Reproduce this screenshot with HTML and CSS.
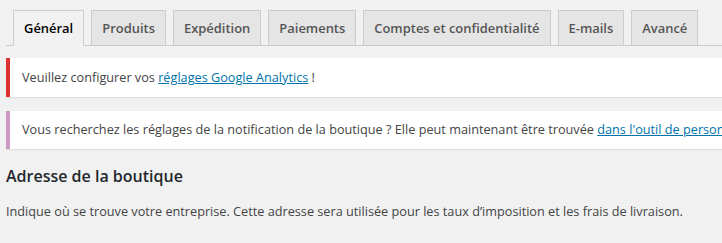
FILE: index.html
```html
<!DOCTYPE html>
<html lang="fr">
<head>
<meta charset="utf-8">
<title>Réglages</title>
<link rel="stylesheet" href="styles.css">
</head>
<body>
<div class="wrap">
  <nav class="tabs">
    <a class="tab active" href="#">Général</a>
    <a class="tab" href="#">Produits</a>
    <a class="tab" href="#">Expédition</a>
    <a class="tab" href="#">Paiements</a>
    <a class="tab" href="#">Comptes et confidentialité</a>
    <a class="tab" href="#">E-mails</a>
    <a class="tab" href="#">Avancé</a>
  </nav>
  <div class="notice notice-error">
    <p>Veuillez configurer vos <a href="#">réglages Google Analytics</a> !</p>
  </div>
  <div class="notice notice-wc">
    <p>Vous recherchez les réglages de la notification de la boutique ? Elle peut maintenant être trouvée <a href="#">dans l'outil de personnalisation</a>.</p>
  </div>
  <h2 class="section-title">Adresse de la boutique</h2>
  <p class="section-desc">Indique où se trouve votre entreprise. Cette adresse sera utilisée pour les taux d’imposition et les frais de livraison.</p>
</div>
</body>
</html>
```
FILE: styles.css
```css
html, body {
  margin: 0;
  padding: 0;
  background: #f1f1f1;
}
body {
  font-family: "Open Sans", "Noto Sans", sans-serif;
  font-size: 12.7px;
  color: #444;
  overflow: hidden;
}
.wrap {
  padding-left: 6px;
}
.tabs {
  display: flex;
  padding-top: 10px;
  border-bottom: 1px solid #ccc;
  white-space: nowrap;
}
.tab {
  margin-left: 7px;
  margin-bottom: -1px;
  padding: 5px 10px;
  border: 1px solid #ccc;
  background: #e5e5e5;
  color: #555;
  font-size: 12.95px;
  font-weight: 600;
  line-height: 24px;
  text-decoration: none;
}
.tab.active {
  background: #f1f1f1;
  color: #000;
  border-bottom-color: #f1f1f1;
}
.notice {
  background: #fff;
  border-left: 4px solid #fff;
  box-shadow: 0 1px 1px rgba(0,0,0,0.08);
  padding: 1px 12px;
  margin-top: 12px;
  white-space: nowrap;
  overflow: hidden;
}
.notice + .notice {
  margin-top: 14px;
}
.notice p {
  margin: 6.5px 0;
  padding: 2px 0;
  line-height: 19.5px;
}
.notice-error {
  border-left-color: #dc3232;
}
.notice-wc {
  border-left-color: #cc99c2;
}
.notice a {
  color: #0073aa;
}
.section-title {
  margin: 15px 0 0;
  font-size: 16px;
  line-height: 24px;
  font-weight: 600;
  color: #23282d;
}
.section-desc {
  margin: 14px 0 0;
  line-height: 19.5px;
  white-space: nowrap;
}
```
